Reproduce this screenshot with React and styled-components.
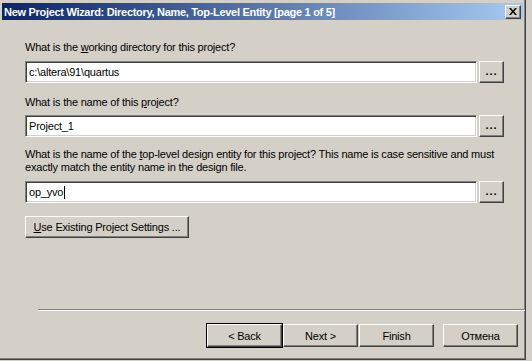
import styled, { createGlobalStyle } from "styled-components";

const GlobalStyle = createGlobalStyle`
	html, body {
		margin: 0;
		padding: 0;
		background: #d4d0c8;
	}
	body {
		font-family: "Liberation Sans", Arial, sans-serif;
		font-size: 11px;
		letter-spacing: -0.2px;
		color: #000;
	}
`;

const Window = styled.div`
	width: 526px;
	height: 360px;
	background: #d4d0c8;
	border-right: 1px solid #404040;
	border-bottom: 1px solid #404040;
	box-shadow: inset -1px -1px 0 #808080;
	display: flex;
	flex-direction: column;
	box-sizing: border-box;
	overflow: hidden;
`;

const TitleBar = styled.div`
	margin: 3px 2px 0 2px;
	height: 17px;
	display: flex;
	align-items: center;
	justify-content: space-between;
	padding: 0 2px 0 2px;
	background: linear-gradient(to right, #0a246a, #a6caf0);
`;

const TitleText = styled.div`
	color: #fff;
	font-weight: bold;
	font-size: 11px;
	letter-spacing: -0.3px;
	white-space: nowrap;
`;

const CloseButton = styled.div`
	width: 16px;
	height: 14px;
	box-sizing: border-box;
	background: #d4d0c8;
	border-top: 1px solid #fff;
	border-left: 1px solid #fff;
	border-right: 1px solid #404040;
	border-bottom: 1px solid #404040;
	box-shadow: inset -1px -1px 0 #808080;
	display: flex;
	align-items: center;
	justify-content: center;
`;

const Body = styled.div`
	flex: 1;
	display: flex;
	flex-direction: column;
	padding: 21px 0 0 25px;
`;

const Label = styled.div`
	line-height: 13px;
	margin-top: ${(p) => p.$gap || 0}px;
	white-space: nowrap;
`;

const Key = styled.span`
	text-decoration: underline;
`;

const FieldRow = styled.div`
	display: flex;
	gap: 2px;
	margin-top: ${(p) => p.$gap || 0}px;
`;

const TextBox = styled.div`
	width: 452px;
	height: 22px;
	box-sizing: border-box;
	background: #fff;
	border-top: 1px solid #808080;
	border-left: 1px solid #808080;
	border-right: 1px solid #fff;
	border-bottom: 1px solid #fff;
	box-shadow: inset 1px 1px 0 #404040, inset -1px -1px 0 #d4d0c8;
	padding: 0 3px;
	display: flex;
	align-items: center;
	white-space: pre;
`;

const Caret = styled.span`
	display: inline-block;
	width: 1px;
	height: 13px;
	background: #000;
	margin-left: 1px;
`;

const Button = styled.div`
	width: ${(p) => p.$w || 75}px;
	height: ${(p) => p.$h || 23}px;
	box-sizing: border-box;
	background: #d4d0c8;
	border-top: 1px solid #fff;
	border-left: 1px solid #fff;
	border-right: 1px solid #404040;
	border-bottom: 1px solid #404040;
	box-shadow: inset -1px -1px 0 #808080;
	display: flex;
	align-items: center;
	justify-content: center;
	white-space: nowrap;
	outline: ${(p) => (p.$default ? "1px solid #000" : "none")};
	outline-offset: 0;
`;

const BrowseDots = styled.span`
	font-weight: bold;
	letter-spacing: 1px;
	margin-top: -3px;
`;

const SettingsRow = styled.div`
	margin-top: 13px;
`;

const Separator = styled.div`
	margin: auto 0 0 13px;
	width: 501px;
	height: 0;
	border-top: 1px solid #808080;
	border-bottom: 1px solid #fff;
`;

const Footer = styled.div`
	display: flex;
	justify-content: flex-start;
	padding: 13px 0 12px 182px;
`;

const NavGroup = styled.div`
	display: flex;
	gap: 1px;
	margin-right: 9px;
`;

const CloseGlyph = () => (
	<svg width="8" height="7" viewBox="0 0 8 7">
		<path d="M0 0h2l2 2.5L6 0h2L5 3.5L8 7H6L4 4.5L2 7H0l3-3.5z" fill="#000" />
	</svg>
);

export default function App() {
	return (
		<>
			<GlobalStyle />
			<Window>
				<TitleBar>
					<TitleText>
						New Project Wizard: Directory, Name, Top-Level Entity [page 1 of 5]
					</TitleText>
					<CloseButton>
						<CloseGlyph />
					</CloseButton>
				</TitleBar>
				<Body>
					<Label>
						What is the <Key>w</Key>orking directory for this project?
					</Label>
					<FieldRow $gap={7}>
						<TextBox>c:\altera\91\quartus</TextBox>
						<Button $w={25} $h={22}>
							<BrowseDots>...</BrowseDots>
						</Button>
					</FieldRow>
					<Label $gap={13}>
						What is the name of this <Key>p</Key>roject?
					</Label>
					<FieldRow $gap={6}>
						<TextBox>Project_1</TextBox>
						<Button $w={25} $h={22}>
							<BrowseDots>...</BrowseDots>
						</Button>
					</FieldRow>
					<Label $gap={11}>
						What is the name of the <Key>t</Key>op-level design entity for this
						project? This name is case sensitive and must
					</Label>
					<Label>exactly match the entity name in the design file.</Label>
					<FieldRow $gap={7}>
						<TextBox>
							op_yvo
							<Caret />
						</TextBox>
						<Button $w={25} $h={22}>
							<BrowseDots>...</BrowseDots>
						</Button>
					</FieldRow>
					<SettingsRow>
						<Button $w={164} $h={22}>
							<Key>U</Key>se Existing Project Settings ...
						</Button>
					</SettingsRow>
					<Separator />
					<Footer>
						<NavGroup>
							<Button $default>&lt; Back</Button>
							<Button>Next &gt;</Button>
							<Button>Finish</Button>
						</NavGroup>
						<Button>Отмена</Button>
					</Footer>
				</Body>
			</Window>
		</>
	);
}
